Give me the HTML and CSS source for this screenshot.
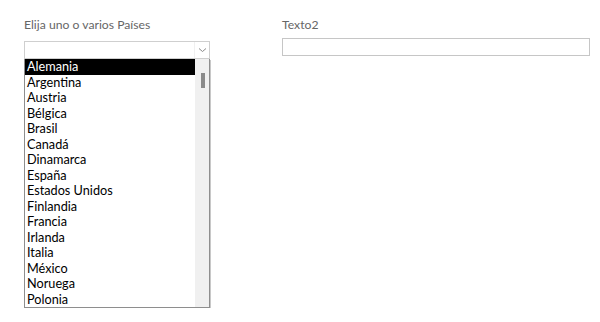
FILE: index.html
```html
<!DOCTYPE html>
<html lang="es">
<head>
    <meta charset="UTF-8">
    <title>Países</title>
    <link rel="stylesheet" href="styles.css">
</head>
<body>
    <div class="form">
        <div class="field field-paises">
            <div class="field-label">Elija uno o varios Países</div>
            <div class="combo">
                <div class="combo-value"></div>
                <div class="combo-arrow">
                    <svg width="9" height="6" viewBox="0 0 9 6"><path d="M1 1.5 L4.5 4.5 L8 1.5" fill="none" stroke="#8a8a8a" stroke-width="1"/></svg>
                </div>
            </div>
            <div class="dropdown">
                <ul class="options">
                    <li class="selected">Alemania</li>
                    <li>Argentina</li>
                    <li>Austria</li>
                    <li>Bélgica</li>
                    <li>Brasil</li>
                    <li>Canadá</li>
                    <li>Dinamarca</li>
                    <li>España</li>
                    <li>Estados Unidos</li>
                    <li>Finlandia</li>
                    <li>Francia</li>
                    <li>Irlanda</li>
                    <li>Italia</li>
                    <li>México</li>
                    <li>Noruega</li>
                    <li>Polonia</li>
                </ul>
                <div class="scrollbar">
                    <div class="thumb"></div>
                </div>
            </div>
        </div>

        <div class="field field-texto">
            <div class="field-label">Texto2</div>
            <div class="textbox"></div>
        </div>
    </div>
</body>
</html>
```

FILE: styles.css
```css
body {
    margin: 0;
    background: #ffffff;
    font-family: 'Lato', 'Open Sans', sans-serif;
    color: #000000;
}

.form {
    display: flex;
    align-items: flex-start;
    padding: 18px 0 0 24px;
}

.field-paises {
    width: 186px;
}

.field-texto {
    width: 308px;
    margin-left: 72px;
}

.field-label {
    font-size: 12.2px;
    line-height: 14px;
    color: #666666;
    margin-bottom: 9px;
}

.field-texto .field-label {
    margin-bottom: 6px;
}

.combo {
    display: flex;
    height: 16px;
    border: 1px solid #cfcfcf;
    background: #ffffff;
}

.combo-value {
    flex: 1;
}

.combo-arrow {
    width: 14px;
    border-left: 1px solid #f0f0f0;
    display: flex;
    align-items: center;
    justify-content: center;
}

.dropdown {
    display: flex;
    height: 248px;
    border: 1px solid #8e8e8e;
    border-top: 0;
    box-shadow: 1px 1px 0 #c8c8c8;
    background: #ffffff;
    overflow: hidden;
}

.options {
    flex: 1;
    list-style: none;
    margin: 0;
    padding: 0;
}

.options li {
    height: 15.5px;
    line-height: 15.5px;
    font-size: 12.7px;
    padding-left: 2px;
    white-space: nowrap;
}

.options li.selected {
    background: #000000;
    color: #ffffff;
}

.scrollbar {
    width: 14px;
    background: #f0f0f0;
    position: relative;
}

.thumb {
    position: absolute;
    top: 14px;
    left: 6px;
    width: 4px;
    height: 15px;
    background: #8a8a8a;
}

.textbox {
    height: 16px;
    border: 1px solid #c6c6c6;
    background: #ffffff;
}
```
